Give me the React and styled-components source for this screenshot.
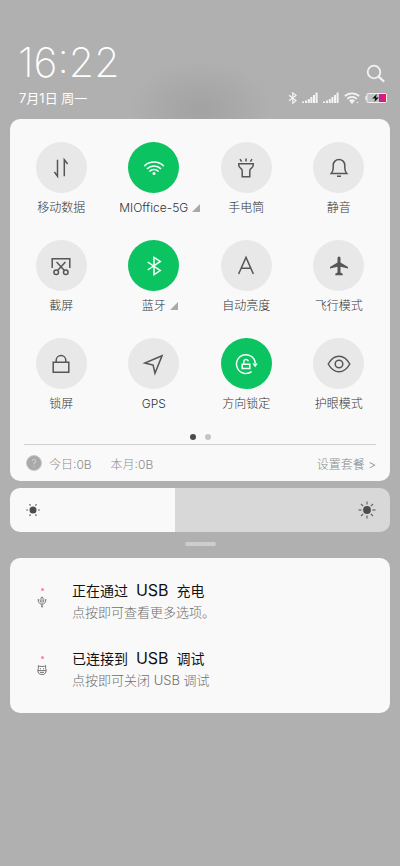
import styled, { createGlobalStyle } from "styled-components";
import { useState } from "react";

const GlobalStyle = createGlobalStyle`
  * {
    box-sizing: border-box;
  }
  body {
    margin: 0;
    background: #b0b0b0;
    font-family: Inter, "Noto Sans CJK SC", sans-serif;
    font-weight: 300;
  }
  button {
    font: inherit;
    color: inherit;
    background: none;
    border: 0;
    padding: 0;
    cursor: pointer;
  }
`;

// every tile icon is drawn around the origin
const icons = {
  data: <path d="M-3.5-8.3V8.3L-6.6 4M3.3 8.3V-8.3L6.6-4" />,
  wifi: (
    <>
      <path d="M-9.7-1.9a13.8 13.8 0 0 1 19.4 0M-7 .9a10 10 0 0 1 14 0M-4.6 3.4a6.4 6.4 0 0 1 9.2 0" />
      <circle cy="5.6" r="1.5" fill="currentColor" stroke="none" />
    </>
  ),
  torch: (
    <path d="M0-9.5v3M-6-8.8l1.6 2.4M6-8.8l-1.6 2.4M-7.2-4.3H7.2v1.6c0 3-3.4 2.6-3.4 5.4v6h-7.6v-6c0-2.8-3.4-2.4-3.4-5.4z" />
  ),
  bell: (
    <path d="M-7.8 5.6C-6.4 4-5.8 2.6-5.8 0v-2.8a5.8 5.8 0 0 1 11.6 0V0c0 2.6.6 4 2 5.6zM-2 8.2h4" />
  ),
  screenshot: (
    <>
      <path d="M-8.8 2v-9.3H8.8V2M-3.4 4.5 4.4-4M3.4 4.5-4.4-4" />
      <circle cx="-4.8" cy="6.3" r="2.3" />
      <circle cx="4.8" cy="6.3" r="2.3" />
    </>
  ),
  bluetooth: <path d="M-6.3-4 6.3 4.6 0 8.6V-8.6L6.3-4.6-6.3 4" />,
  auto: <path d="M-7.4 8 0-8.6 7.4 8M-5 2.3H5" />,
  plane: (
    <path
      d="M-1.5-8q0-1.6 1.5-1.6T1.5-8v4.6L9 1v1.6L1.5.8v5.8l2.2 1.2v1.4h-7.4V7.8l2.2-1.2V.8L-9 2.6V1l7.5-4.4z"
      fill="currentColor"
      stroke="none"
    />
  ),
  lock: (
    <path d="M-7.8-1.8H7.8v10H-7.8zM-4.8-1.8v-1.9a4.8 4.8 0 0 1 9.6 0v1.9" />
  ),
  gps: <path d="M8-8.2-9.2-1-.9 1 1 9.2z" />,
  rotation: (
    <>
      <path d="M5.6 7.6A9.4 9.4 0 1 1 9.3-.6M-3.8.2h7.6v4.2h-7.6zM-2.2.2v-2.4a2.2 2.2 0 0 1 4.4-.4" />
      <path d="M6.4-.4h5.4L9.2 3.2z" fill="currentColor" stroke="none" />
    </>
  ),
  eye: (
    <>
      <path d="M-10.8 0C-5-10.4 5-10.4 10.8 0 5 10.4-5 10.4-10.8 0z" />
      <circle r="3.8" />
    </>
  ),
};

const tileArr = [
  { name: "移动数据", icon: "data" },
  { name: "MIOffice-5G", icon: "wifi", active: true, more: true },
  { name: "手电筒", icon: "torch" },
  { name: "静音", icon: "bell" },
  { name: "截屏", icon: "screenshot" },
  { name: "蓝牙", icon: "bluetooth", active: true, more: true },
  { name: "自动亮度", icon: "auto" },
  { name: "飞行模式", icon: "plane" },
  { name: "锁屏", icon: "lock" },
  { name: "GPS", icon: "gps" },
  { name: "方向锁定", icon: "rotation", active: true },
  { name: "护眼模式", icon: "eye" },
];

const Signal = () => (
  <svg width="16" height="12" viewBox="0 0 16 12" fill="#f4f4f4">
    <path d="M0 9.6h2V11H0zM3 8.4h2V11H3zM5.8 7h2v4h-2zM8.4 5h2v6h-2zM11 3h2v8h-2zM13.6.6h2V11h-2z" />
  </svg>
);

const Sun = ({ rays, core, from, to }) => (
  <svg width="18" height="18" viewBox="-9 -9 18 18">
    <circle r={core} fill="#4c4c4c" />
    {Array.from({ length: rays }, (_, i) => (
      <path
        key={i}
        d={`M${from} 0H${to}`}
        transform={`rotate(${(i * 360) / rays})`}
        stroke="#666"
        strokeWidth="1.2"
      />
    ))}
  </svg>
);

const App = () => {
  const [tiles, setTiles] = useState(tileArr);
  const [brightness, setBrightness] = useState(43);

  const toggle = (name) =>
    setTiles(
      tiles.map((t) => (t.name === name ? { ...t, active: !t.active } : t))
    );

  return (
    <Wrapper>
      <GlobalStyle />
      <Header>
        <div>
          <Time>16:22</Time>
          <DateText>7月1日 周一</DateText>
        </div>
        <HeaderRight>
          <SearchButton aria-label="搜索">
            <svg width="20" height="20" viewBox="0 0 20 20" fill="none" stroke="#f2f2f2">
              <circle cx="8" cy="8" r="6.3" strokeWidth="1.8" />
              <path d="m12.6 12.6 5.6 5.2" strokeWidth="2.2" />
            </svg>
          </SearchButton>
          <Status>
            <svg width="10" height="12" viewBox="0 0 10 12" fill="none" stroke="#f4f4f4" strokeWidth="1.2">
              <path d="M2 3.2 9 8.6 5.8 11.2V.8L9 3.4 2 8.8" />
            </svg>
            <Signal />
            <Signal />
            <svg width="16" height="12" viewBox="0 0 16 12" fill="none" stroke="#f4f4f4" strokeWidth="1.7">
              <path d="M.8 4.2a10.4 10.4 0 0 1 14.4 0M3.2 6.8a7 7 0 0 1 9.6 0M5.6 9.2a3.6 3.6 0 0 1 4.8 0" />
              <path d="m6.4 9.6 1.6 2 1.6-2zM12.6 10.6h1.6" strokeWidth="1" fill="#f4f4f4" />
            </svg>
            <svg width="23" height="12" viewBox="0 0 23 12">
              <defs>
                <linearGradient id="charge">
                  <stop offset="0" stopColor="#b51fb4" />
                  <stop offset="1" stopColor="#fb1450" />
                </linearGradient>
              </defs>
              <rect x="1.9" y="1.5" width="19.6" height="9" rx="1.2" fill="#c2c2c2" stroke="#f0f0f0" />
              <path d="M.4 4h1.2v4H.4z" fill="#f0f0f0" />
              <rect x="14" y="2" width="7" height="8" fill="url(#charge)" />
              <path d="M11.8 2 7.2 6.5h2.9L9.4 10l4.5-4.6H11z" fill="#111" />
            </svg>
          </Status>
        </HeaderRight>
      </Header>

      <Panel>
        <TileGrid>
          {tiles.map((tile) => (
            <Tile
              key={tile.name}
              aria-pressed={!!tile.active}
              onClick={() => toggle(tile.name)}
            >
              <Circle $active={tile.active}>
                <svg width="26" height="26" viewBox="-13 -13 26 26">
                  {icons[tile.icon]}
                </svg>
              </Circle>
              <TileName>
                {tile.name}
                {tile.more && (
                  <More width="8" height="8" viewBox="0 0 8 8">
                    <path d="M8 0v8H0z" fill="#a9a9a9" />
                  </More>
                )}
              </TileName>
            </Tile>
          ))}
        </TileGrid>
        <Dots>
          <Dot $active />
          <Dot />
        </Dots>
        <Usage>
          <Help>?</Help>
          <span>今日:0B</span>
          <span>本月:0B</span>
          <PlanLink href="#plan">设置套餐 &gt;</PlanLink>
        </Usage>
      </Panel>

      <Brightness>
        <Range
          type="range"
          aria-label="亮度"
          min="0"
          max="100"
          value={brightness}
          onChange={(e) => setBrightness(Number(e.target.value))}
          style={{ "--level": `${brightness}.5%` }}
        />
        <SunIcons>
          <Sun rays={6} core={3.5} from={5} to={6.8} />
          <Sun rays={8} core={3.9} from={5.4} to={8.5} />
        </SunIcons>
      </Brightness>
      <Handle />

      <Notifications>
        <Notification>
          <AppIcon>
            <Badge />
            <svg width="10" height="12" viewBox="0 0 10 12" fill="none" stroke="#777" strokeWidth=".9">
              <path d="M5 11.4V1M3.4 2.6 5 .8l1.6 1.8M1.4 3.6v2.6L5 9.2l3.6-3V3.6M.6 3.8h1.8M7.6 3.8h1.8M3.4 3.4v3M6.6 3.4v3M4 10.6h2" />
            </svg>
          </AppIcon>
          <div>
            <Title>
              正在通过 <Latin>USB</Latin> 充电
            </Title>
            <Text>点按即可查看更多选项。</Text>
          </div>
        </Notification>
        <Notification>
          <AppIcon>
            <Badge />
            <svg width="10" height="12" viewBox="0 0 10 12" fill="none" stroke="#666" strokeWidth=".9">
              <path d="M1.4 1.4 2.6 2.4h4.8l1.2-1v3.2l.8 2-1 2.6-1.8 1.2H3.4L1.6 9.2l-1-2.6.8-2zM1 6.6h8M3 4.8h1M6 4.8h1M3 8.4h4" />
            </svg>
          </AppIcon>
          <div>
            <Title>
              已连接到 <Latin>USB</Latin> 调试
            </Title>
            <Text>点按即可关闭 USB 调试</Text>
          </div>
        </Notification>
      </Notifications>
    </Wrapper>
  );
};

const Wrapper = styled.div`
  min-height: 100vh;
  padding: 38px 10px 24px;
  background: radial-gradient(
      ellipse 72px 50px at 50% 110px,
      #a2a2a2 0%,
      rgba(166, 166, 166, 0.8) 45%,
      rgba(176, 176, 176, 0) 100%
    ),
    #b0b0b0;
`;

const Header = styled.header`
  display: flex;
  justify-content: space-between;
  align-items: flex-end;
  padding: 0 2px 0 9px;
  margin-bottom: 11px;
  color: white;
`;

const Time = styled.div`
  margin-left: -1px;
  font-size: 41px;
  font-weight: 200;
  line-height: 48px;
`;

const DateText = styled.div`
  font-size: 13px;
  font-weight: 400;
  line-height: 20px;
  margin-top: 2px;
`;

const HeaderRight = styled.div`
  display: flex;
  flex-direction: column;
  align-items: flex-end;
  gap: 8px;
  padding-bottom: 4px;
`;

const SearchButton = styled.button`
  display: flex;
  margin-right: 2px;
`;

const Status = styled.div`
  display: flex;
  align-items: center;
  gap: 5px;
`;

const Panel = styled.section`
  padding: 23px 5px 0;
  border-radius: 10px;
  background: #f9f9f9;
`;

const TileGrid = styled.div`
  display: grid;
  grid-template-columns: repeat(4, 1fr);
  row-gap: 22px;
`;

const Tile = styled.button`
  display: flex;
  flex-direction: column;
  align-items: center;
  gap: 5px;
`;

const Circle = styled.span`
  display: flex;
  align-items: center;
  justify-content: center;
  width: 51px;
  height: 51px;
  border-radius: 50%;
  color: ${(props) => (props.$active ? "#f4fff8" : "#565656")};
  background: ${(props) => (props.$active ? "#0cc361" : "#e8e8e8")};

  svg {
    fill: none;
    stroke: currentColor;
    stroke-width: 1.5;
  }
`;

const TileName = styled.span`
  display: flex;
  align-items: center;
  gap: 4px;
  font-size: 12px;
  line-height: 20px;
  white-space: nowrap;
  color: #333;
`;

// hangs past the label so the text itself stays centred
const More = styled.svg`
  margin-right: -12px;
`;

const Dots = styled.div`
  display: flex;
  justify-content: center;
  gap: 9px;
  margin-top: 20px;
`;

const Dot = styled.span`
  width: 6px;
  height: 6px;
  border-radius: 50%;
  background: ${(props) => (props.$active ? "#4a4a4a" : "#c4c4c4")};
`;

const Usage = styled.div`
  display: flex;
  align-items: center;
  gap: 19px;
  height: 37px;
  margin: 4px 9px 0;
  padding-left: 2px;
  border-top: 1px solid #cfcfcf;
  font-size: 12px;
  color: #8c8c8c;
`;

const Help = styled.span`
  width: 16px;
  height: 16px;
  margin-right: -12px;
  border: 1px solid #c8c8c8;
  border-radius: 50%;
  background: #a9a9a9;
  color: #dedede;
  font-size: 10px;
  line-height: 14px;
  text-align: center;
`;

const PlanLink = styled.a`
  margin-left: auto;
  color: inherit;
  text-decoration: none;
`;

const Brightness = styled.div`
  position: relative;
  height: 44px;
  margin-top: 7px;
  border-radius: 10px;
  overflow: hidden;
`;

const Range = styled.input`
  appearance: none;
  display: block;
  width: 100%;
  height: 100%;
  margin: 0;
  background: linear-gradient(
    to right,
    #f9f9f9 var(--level),
    #d8d8d8 var(--level)
  );

  &::-webkit-slider-thumb {
    appearance: none;
    width: 1px;
    height: 44px;
  }
`;

const SunIcons = styled.div`
  position: absolute;
  inset: 0;
  display: flex;
  align-items: center;
  justify-content: space-between;
  padding: 0 14px;
  pointer-events: none;
`;

const Handle = styled.div`
  width: 31px;
  height: 4px;
  margin: 10px auto 12px;
  border-radius: 2px;
  background: #cdcdcd;
`;

const Notifications = styled.section`
  display: grid;
  gap: 26px;
  padding: 22px 20px 23px 24px;
  border-radius: 10px;
  background: #f9f9f9;
`;

const Notification = styled.article`
  display: flex;
  align-items: flex-start;
  gap: 22px;
`;

const AppIcon = styled.span`
  display: flex;
  flex-direction: column;
  align-items: center;
  gap: 5px;
  width: 16px;
  padding-top: 8px;
`;

const Badge = styled.span`
  width: 3px;
  height: 3px;
  border-radius: 50%;
  background: #f58ba0;
`;

const Title = styled.h2`
  margin: 0;
  font-size: 14px;
  font-weight: 400;
  line-height: 22px;
  color: #111;
`;

const Latin = styled.span`
  margin: 0 4px;
  font-size: 16px;
  line-height: 16px;
`;

const Text = styled.p`
  margin: 0;
  font-size: 13px;
  line-height: 20px;
  color: #6e6e6e;
`;

export default App;
